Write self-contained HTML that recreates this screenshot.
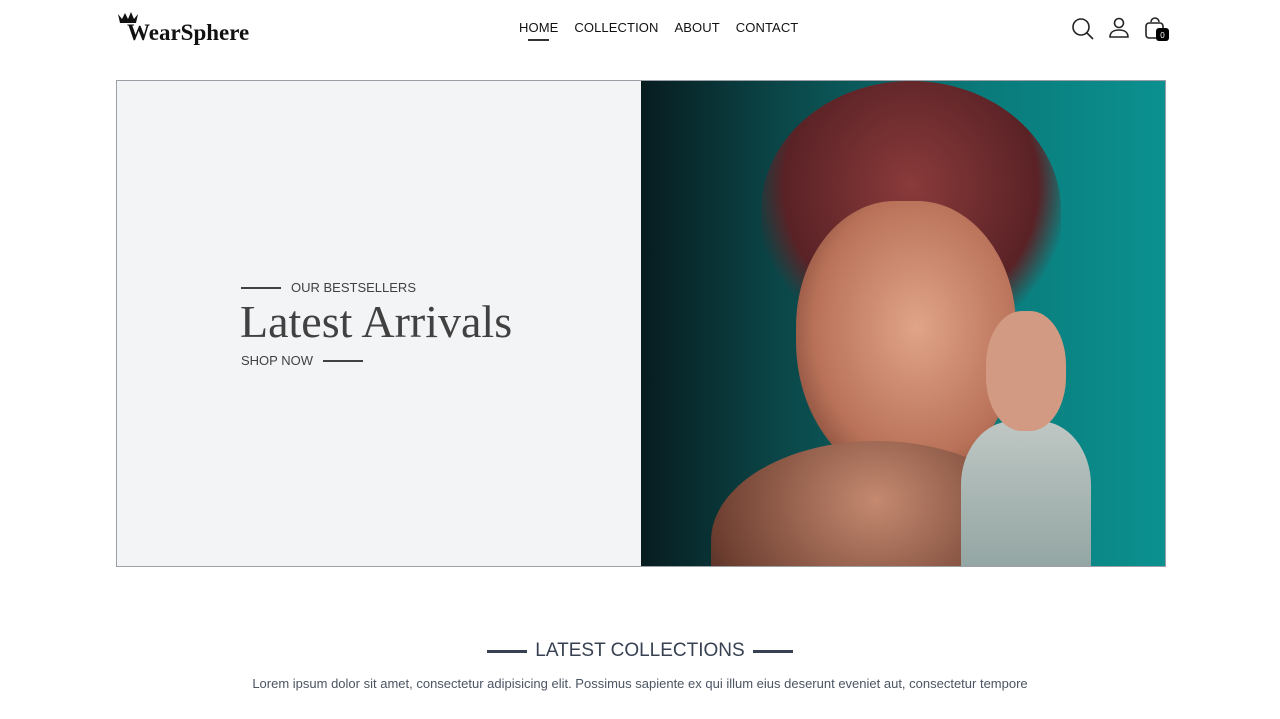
<!DOCTYPE html>
<html><head><meta charset="utf-8"><style>
*{margin:0;padding:0;box-sizing:border-box}
body{width:1280px;height:719px;overflow:hidden;background:#fff;font-family:"Liberation Sans",sans-serif;color:#111}
.logo{position:absolute;left:127px;top:20px;font-family:"Liberation Serif",serif;font-weight:bold;font-size:23px;color:#111}
.crown{position:absolute;left:117px;top:11px}
nav{position:absolute;top:20px;left:519px;display:flex;gap:16px;font-size:13px;color:#111;letter-spacing:0.1px}
nav span{position:relative}
.ul:after{content:"";position:absolute;left:9px;right:9px;top:19px;height:2px;background:#333}
.icons svg{position:absolute}
.hero{position:absolute;left:116px;top:80px;width:1050px;height:487px;border:1px solid #9ca0a6;background:#f3f4f6;overflow:hidden}
.img{position:absolute;left:524px;top:0;width:525px;height:485px;background:linear-gradient(90deg,#071c1f 0%,#0b4446 25%,#0a7a7a 65%,#0b9190 100%)}
.t1{position:absolute;left:124px;top:199px;font-size:13px;color:#414141;display:flex;align-items:center;gap:10px}
.line{display:inline-block;width:40px;height:2px;background:#414141}
.t2{position:absolute;left:123px;top:214px;font-family:"Liberation Serif",serif;font-size:46px;color:#414141}
.t3{position:absolute;left:124px;top:272px;font-size:13px;color:#414141;display:flex;align-items:center;gap:10px}
.sec{position:absolute;top:640px;left:0;width:1280px;text-align:center;font-size:19px;color:#374151;display:flex;justify-content:center;align-items:center;gap:8px}
.sec .l{width:40px;height:3px;background:#374151}
.p{position:absolute;top:676px;left:0;width:1280px;text-align:center;font-size:13px;color:#4b5563}
</style></head><body>
<svg class="crown" width="22" height="14" viewBox="0 0 22 14"><path d="M1 3l4 5 3-6 3 6 3-7 3 7 4-5-2 9H3z" fill="#111"/></svg>
<div class="logo">WearSphere</div>
<nav><span class="ul">HOME</span><span>COLLECTION</span><span>ABOUT</span><span>CONTACT</span></nav>
<div class="icons">
<svg style="left:1071px;top:17px" width="24" height="24" viewBox="0 0 24 24"><circle cx="10" cy="10" r="8" fill="none" stroke="#222" stroke-width="1.6"/><path d="M16 16l6 6" stroke="#222" stroke-width="1.6"/></svg>
<svg style="left:1108px;top:17px" width="22" height="22" viewBox="0 0 22 22"><circle cx="11" cy="6" r="4.5" fill="none" stroke="#222" stroke-width="1.6"/><path d="M2 20c0-5 4-7 9-7s9 2 9 7z" fill="none" stroke="#222" stroke-width="1.6"/></svg>
<svg style="left:1144px;top:16px" width="28" height="28" viewBox="0 0 28 28"><path d="M7 6a4 4 0 0 1 8 0" fill="none" stroke="#222" stroke-width="1.6"/><rect x="2" y="7" width="17" height="15" rx="3" fill="none" stroke="#222" stroke-width="1.6"/><rect x="12" y="12" width="13" height="13" rx="3" fill="#000"/><text x="18.5" y="22" font-size="8" fill="#fff" text-anchor="middle" font-family="Liberation Sans">0</text></svg>
</div>
<div class="hero">
<div class="t1"><span class="line"></span>OUR BESTSELLERS</div>
<div class="t2">Latest Arrivals</div>
<div class="t3">SHOP NOW<span class="line"></span></div>
<div class="img">
<div style="position:absolute;left:120px;top:0;width:300px;height:260px;border-radius:50% 50% 40% 40%;background:radial-gradient(ellipse at 50% 40%,#8a3a3a,#5a2226 60%,transparent 75%)"></div>
<div style="position:absolute;left:155px;top:120px;width:220px;height:280px;border-radius:45% 45% 50% 50%;background:radial-gradient(ellipse at 55% 45%,#e0a488,#b97259 60%,#6e3a2e 90%)"></div>
<div style="position:absolute;left:70px;top:360px;width:330px;height:200px;border-radius:50% 50% 0 0;background:radial-gradient(ellipse at 50% 30%,#c58a70,#6d3e30 70%,#2a1e1e)"></div>
<div style="position:absolute;left:320px;top:340px;width:130px;height:160px;border-radius:40% 40% 0 0;background:linear-gradient(#bfc7c4,#8fa3a0)"></div>
<div style="position:absolute;left:345px;top:230px;width:80px;height:120px;border-radius:45%;background:#d29a82"></div>
</div>
</div>
<div class="sec"><span class="l"></span><span>LATEST COLLECTIONS</span><span class="l"></span></div>
<div class="p">Lorem ipsum dolor sit amet, consectetur adipisicing elit. Possimus sapiente ex qui illum eius deserunt eveniet aut, consectetur tempore</div>
</body></html>
